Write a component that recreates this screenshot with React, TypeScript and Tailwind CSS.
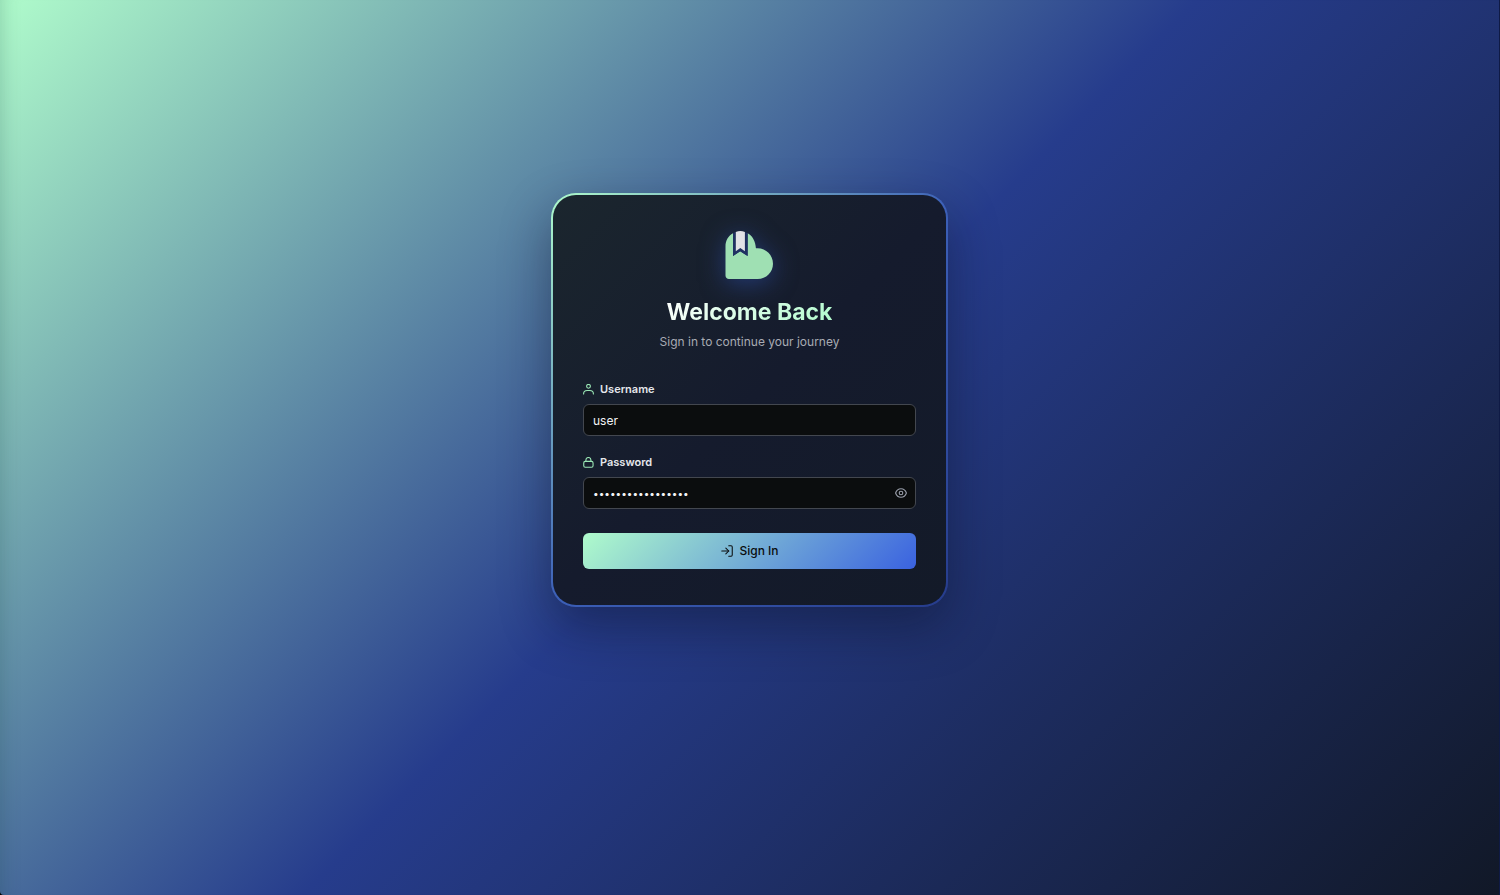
import { useState } from "react";
import { LogIn } from "lucide-react";

function Logo() {
  return (
    <svg
      viewBox="1 0 48 48"
      className="size-12 overflow-visible drop-shadow-[0_4px_12px_rgba(48,86,190,0.5)]"
      role="img"
      aria-label="Logo"
    >
      <path
        d="M0.5 15.5C0.5 9.5 3.4 4.7 8 2.2V25L15.2 20.2L22.6 25V2.2C27.2 4.6 30.6 9.8 30.9 17.3H32.6C41.2 17.3 48 24.2 48 32.8C48 41.3 41.2 48 32.6 48H4C2 48 0.5 46.5 0.5 44.5Z"
        fill="#9fe0b3"
      />
      <path d="M8 2.2L10.5 1.1V21L15.3 17.8L20.2 21V1.1L22.6 2.2V25L15.2 20.2L8 25Z" fill="#203163" />
      <path d="M10.8 0.9Q15.3 -0.9 19.9 0.9V20.2L15.3 17L10.8 20.2Z" fill="#e2e2e6" />
    </svg>
  );
}

function UserIcon() {
  return (
    <svg
      viewBox="0 0 22 22"
      className="size-[11px] text-[#9be8b6]"
      fill="none"
      stroke="currentColor"
      strokeWidth="2.2"
      strokeLinecap="round"
      aria-hidden="true"
    >
      <circle cx="11" cy="4.600" r="3.8" />
      <path d="M1.2 19.8C1.2 15.4 4.6 13 8.4 13H13.6C17.4 13 20.8 15.4 20.8 19.8" />
    </svg>
  );
}

function LockIcon() {
  return (
    <svg
      viewBox="0 0 22 22"
      className="size-[11px] text-[#9be8b6]"
      fill="none"
      stroke="currentColor"
      strokeWidth="2.2"
      strokeLinecap="round"
      aria-hidden="true"
    >
      <rect x="1.5" y="8.800" width="18.6" height="11.8" rx="3" />
      <path d="M5.8 8.600V6a5 5 0 0 1 10 0V8.600" />
    </svg>
  );
}

function EyeIcon() {
  return (
    <svg viewBox="0 0 24 20" className="h-[10px] w-3" fill="none" stroke="currentColor" strokeWidth="2.2" aria-hidden="true">
      <path d="M1.2 10C3 4.6 7.2 1.5 12 1.5S21 4.6 22.8 10C21 15.4 16.8 18.5 12 18.5S3 15.4 1.2 10Z" strokeLinejoin="round" />
      <circle cx="12" cy="10" r="3.6" />
    </svg>
  );
}

const labelClass = "flex items-center gap-[6px] text-[11px] leading-4 font-semibold text-[#e5e7eb]";
const inputClass =
  "block h-8 w-full rounded-[6px] border border-[#43474f] bg-[#0b0d0e] px-[9px] text-[#f3f4f6] outline-none focus:border-[#affbcb]";

export default function App() {
  const [username, setUsername] = useState("user");
  const [password, setPassword] = useState("correcthorse12345");
  const [visible, setVisible] = useState(false);

  return (
    <div className="bg-black">
      <main className="flex min-h-screen items-center justify-center rounded-bl-[4px] border-r border-[#0f1a45] bg-[linear-gradient(135deg,#affbcb_0%,#263c8c_50%,#111827_100%)] pb-[95px] font-['Inter',sans-serif] shadow-[inset_20px_0_20px_-20px_rgba(15,60,60,0.25)]">
        <section className="w-full max-w-[397px] rounded-[25px] bg-[linear-gradient(135deg,#affbcb_0%,#3c60b8_50%,#263c8c_100%)] p-[2px] shadow-[0_20px_50px_rgba(10,15,30,0.4)]">
          <div className="rounded-[23px] bg-[linear-gradient(135deg,#1b262e_0%,#151b2d_50%,#131a28_100%)] px-[30px] py-9">
            <header className="flex flex-col items-center">
              <Logo />
              <h1 className="mt-4 bg-[linear-gradient(135deg,#ffffff_0%,#affbcb_100%)] bg-clip-text text-[23px] leading-[34px] font-bold text-transparent">
                Welcome Back
              </h1>
              <p className="mt-[5px] text-[12px] leading-4 text-[#a8abb3]">Sign in to continue your journey</p>
            </header>

            <form className="mt-[31px]" onSubmit={(e) => e.preventDefault()}>
              <label htmlFor="username" className={labelClass}>
                <UserIcon />
                Username
              </label>
              <div className="mt-[7px]">
                <input
                  id="username"
                  type="text"
                  autoComplete="username"
                  value={username}
                  onChange={(e) => setUsername(e.target.value)}
                  className={`${inputClass} text-[12px]`}
                />
              </div>

              <label htmlFor="password" className={`mt-[18px] ${labelClass}`}>
                <LockIcon />
                Password
              </label>
              <div className="relative mt-[7px]">
                <input
                  id="password"
                  type={visible ? "text" : "password"}
                  autoComplete="current-password"
                  value={password}
                  onChange={(e) => setPassword(e.target.value)}
                  className={`${inputClass} text-[10px]`}
                />
                <button
                  type="button"
                  aria-label="Show password"
                  onClick={() => setVisible(!visible)}
                  className="absolute inset-y-0 right-[9px] flex items-center text-[#9a9fab]"
                >
                  <EyeIcon />
                </button>
              </div>

              <button
                type="submit"
                className="mt-6 flex h-9 w-full items-center justify-center gap-[5px] rounded-[6px] bg-[linear-gradient(135deg,#affbcb_0%,#3a62e0_100%)] text-[12px] font-medium text-[#0b0d0e]"
              >
                <LogIn className="size-[14px]" strokeWidth={1.8} aria-hidden="true" />
                Sign In
              </button>
            </form>
          </div>
        </section>
      </main>
    </div>
  );
}
